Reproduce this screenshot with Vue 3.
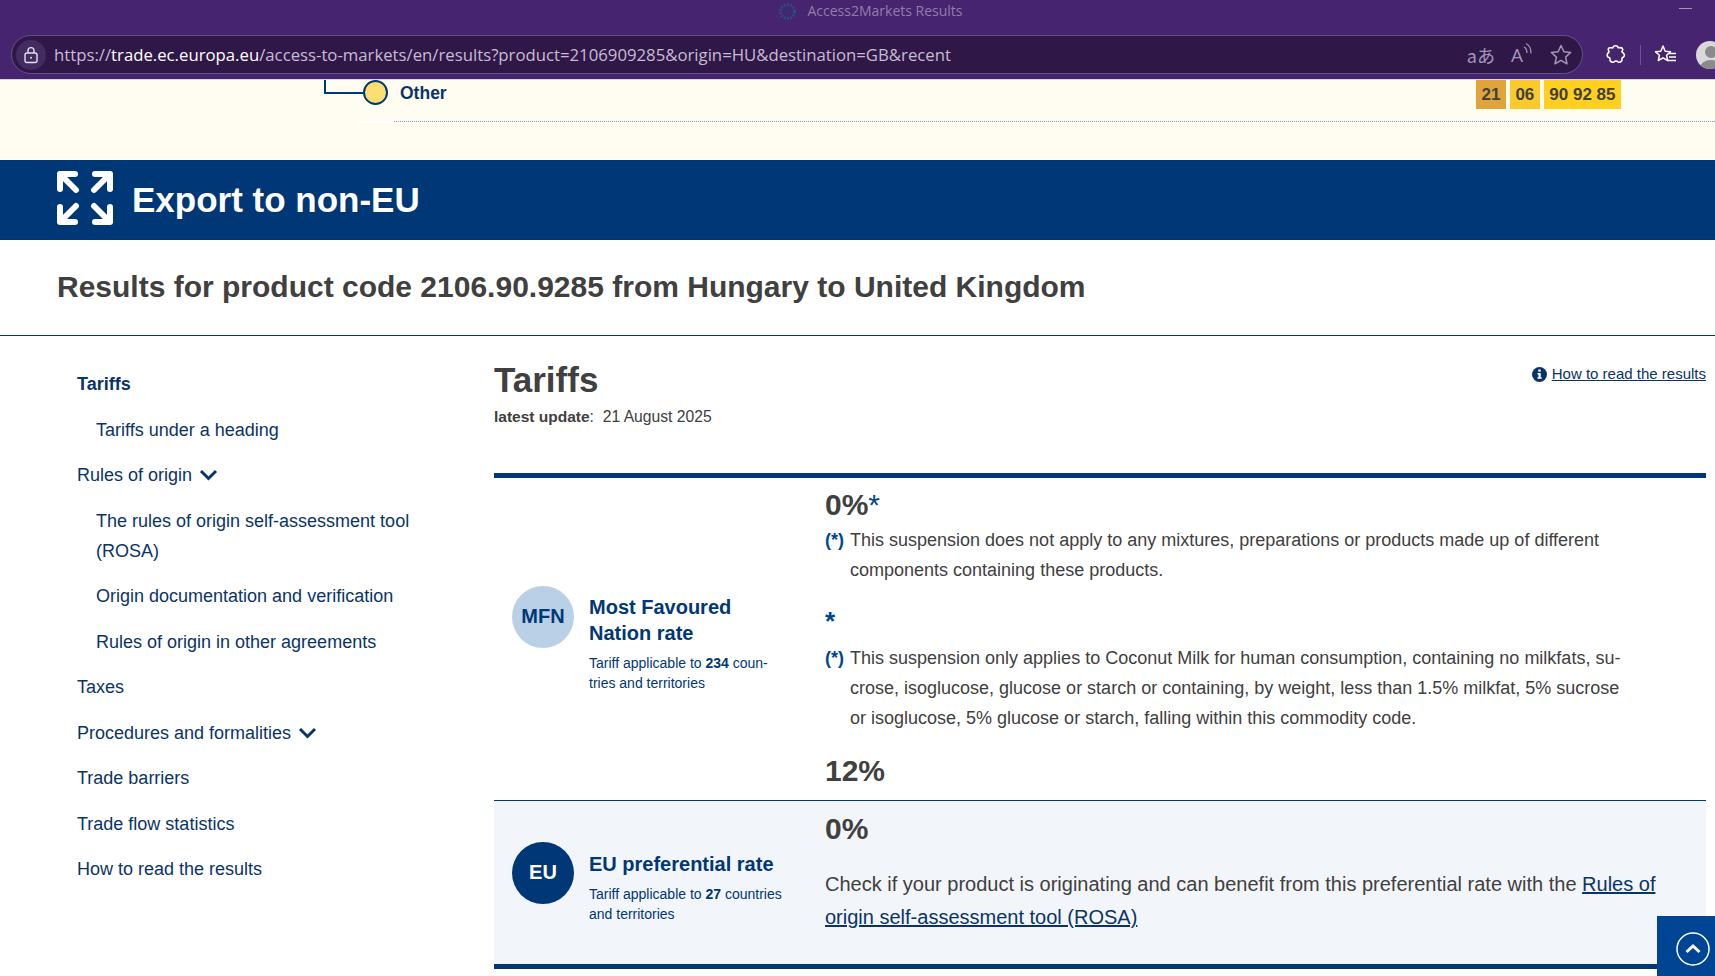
<script setup>
const menu = [
  { label: 'Tariffs', active: true },
  { label: 'Tariffs under a heading', sub: true },
  { label: 'Rules of origin', arrow: true },
  { label: 'The rules of origin self-assessment tool (ROSA)', sub: true },
  { label: 'Origin documentation and verification', sub: true },
  { label: 'Rules of origin in other agreements', sub: true },
  { label: 'Taxes' },
  { label: 'Procedures and formalities', arrow: true },
  { label: 'Trade barriers' },
  { label: 'Trade flow statistics' },
  { label: 'How to read the results' }
]
</script>

<template>
  <div class="page">
    <header class="browser">
      <div class="titlebar">
        <svg class="site-icon" width="19" height="19" viewBox="0 0 19 19"><circle cx="9.5" cy="9.5" r="7" fill="none" stroke="#2c4a86" stroke-width="3" stroke-dasharray="2 1.2" /><circle cx="9.5" cy="9.5" r="3" fill="#35306f" /></svg>
        <span>Access2Markets Results</span>
        <i class="minimize"></i>
      </div>
      <div class="toolbar">
        <div class="addressbar">
          <span class="lock">
            <svg width="18" height="18" viewBox="0 0 18 18" fill="none" stroke="#e6deef" stroke-width="1.4"><rect x="3" y="7" width="12" height="9.5" rx="2" /><path d="M6 7V4.6a3 3 0 0 1 6 0V7" /><circle cx="9" cy="11.7" r="1" fill="#e6deef" stroke="none" /></svg>
          </span>
          <span class="url"><span class="lite">https://</span>trade.ec.europa.eu<span class="lite">/access-to-markets/en/results?product=2106909285&amp;origin=HU&amp;destination=GB&amp;recent</span></span>
          <span class="addr-icons">
            <span class="translate">aあ</span>
            <span class="read">A<svg width="10" height="16" viewBox="0 0 10 16" fill="none" stroke="#a596b9" stroke-width="1.2"><path d="M1 5c2 1 3 3 3 6M3 1.5c3 1.5 5 5 5 10" /></svg></span>
            <svg width="24" height="24" viewBox="0 0 24 24" fill="none" stroke="#a596b9" stroke-width="1.5" stroke-linejoin="round"><path d="M12 2.5l2.9 6.2 6.7.8-5 4.6 1.4 6.7-6-3.4-6 3.4 1.4-6.7-5-4.6 6.7-.8z" /></svg>
          </span>
        </div>
        <div class="tools">
          <svg width="22" height="22" viewBox="0 0 22 22" fill="none" stroke="#fff" stroke-width="1.6" stroke-linejoin="round"><path d="M8 3.5c0-2.4 5-2.4 5 0 0 .8 3.5-.8 4.5 1.2 1 1.800-1 2.600-.5 3.300 1.800 1 3.500 3.500 1.500 5-1.200.8-2 .5-1.500 2 .5 2.500-2.500 4-4 2.800-1-1-3-1-4 0-1.800 1.200-4.500-.5-4-2.800.5-1.500-1.500-1.200-2.500-2.500-1-1.800.5-3.800 1.500-4.500.5-.5-1.500-1.800-.5-3.500C4 2.800 8 4.500 8 3.500z" /></svg>
          <i class="sep"></i>
          <svg width="24" height="22" viewBox="0 0 24 22" fill="none" stroke="#fff" stroke-width="1.5" stroke-linejoin="round"><path d="M9 2l2.200 5.200 5.300.5-3.900 3.600 1.100 5.200L9 13.800l-4.700 2.700 1.100-5.200L1.500 7.700l5.300-.5z" /><path d="M15 9.500h7M15 13h7M13 16.500h9" /></svg>
          <span class="avatar"><i class="head"></i><i class="body"></i></span>
        </div>
      </div>
    </header>

    <section class="cream">
      <div class="tree-row">
        <span class="connector"></span>
        <span class="dot"></span>
        <b class="other">Other</b>
        <span class="codes">
          <span class="code c1">21</span>
          <span class="code c2">06</span>
          <span class="code c3">90 92 85</span>
        </span>
      </div>
      <div class="dotted"><i></i><span></span></div>
    </section>

    <section class="band">
      <svg class="expand" width="56" height="54" viewBox="0 0 56 54" fill="none" stroke="#fff" stroke-width="6" stroke-linejoin="round" stroke-linecap="round">
        <path d="M3 18V3h15M3 3l16 16" />
        <path d="M53 18V3H38M53 3L37 19" />
        <path d="M3 36v15h15M3 51l16-16" />
        <path d="M53 36v15H38M53 51L37 35" />
      </svg>
      <h1>Export to non-EU</h1>
    </section>

    <section class="results">
      <h2>Results for product code 2106.90.9285 from Hungary to United Kingdom</h2>
    </section>

    <div class="content">
      <nav class="side">
        <a v-for="item in menu" :key="item.label" :class="{ active: item.active, sub: item.sub }">
          {{ item.label }}
          <svg v-if="item.arrow" class="chev" width="19" height="12" viewBox="0 0 19 12" fill="none" stroke="#0a3468" stroke-width="3"><path d="M2 2l7.500 7.500L17 2" /></svg>
        </a>
      </nav>

      <main class="main">
        <div class="main-head">
          <div>
            <div class="h-tariffs">Tariffs</div>
            <div class="update"><b>latest update</b>:&nbsp;&nbsp;21 August 2025</div>
          </div>
          <a class="how">
            <svg width="15" height="15" viewBox="0 0 15 15"><circle cx="7.500" cy="7.500" r="7.500" fill="#0a3468" /><rect x="6.300" y="2.500" width="2.400" height="2.200" fill="#fff" /><path d="M5.500 6h3.200v4.300h1v1.400H5.500v-1.400h1V7.400h-1z" fill="#fff" /></svg>
            <u>How to read the results</u>
          </a>
        </div>

        <div class="table">
          <div class="row">
            <div class="rate-label">
              <span class="circle light">MFN</span>
              <div class="rate-text">
                <div class="rate-title">Most Favoured<br />Nation rate</div>
                <div class="rate-sub">Tariff applicable to <b>234</b> coun&shy;tries and territories</div>
              </div>
            </div>
            <div class="rate-body first">
              <div class="pct">0%<span class="star">*</span></div>
              <p class="note"><b>(*)</b><span>This suspension does not apply to any mixtures, preparations or products made up of different components containing these products.</span></p>
              <div class="lone-star">*</div>
              <p class="note"><b>(*)</b><span>This suspension only applies to Coconut Milk for human consumption, containing no milkfats, su&shy;crose, isoglucose, glucose or starch or containing, by weight, less than 1.5% milkfat, 5% sucrose or isoglucose, 5% glucose or starch, falling within this commodity code.</span></p>
              <div class="pct second">12%</div>
            </div>
          </div>
          <div class="row eu">
            <div class="rate-label">
              <span class="circle dark">EU</span>
              <div class="rate-text">
                <div class="rate-title">EU preferential rate</div>
                <div class="rate-sub">Tariff applicable to <b>27</b> countries and territories</div>
              </div>
            </div>
            <div class="rate-body">
              <div class="pct">0%</div>
              <p class="check">Check if your product is originating and can benefit from this preferential rate with the <u>Rules of origin self-assessment tool (ROSA)</u></p>
            </div>
          </div>
        </div>
      </main>
    </div>

    <button class="to-top">
      <svg width="34" height="36" viewBox="0 0 34 36" fill="none" stroke="#fff"><circle cx="17" cy="18" r="16" stroke-width="1.500" /><path d="M10.500 21l6.500-6 6.500 6" stroke-width="3" /></svg>
    </button>
  </div>
</template>

<style scoped>
.page {
  position: relative;
  width: 1715px;
  height: 976px;
  overflow: hidden;
  background: #fff;
  font-family: "Liberation Sans", Arial, sans-serif;
  color: #404040;
}

.browser {
  height: 80px;
  background: #46246f;
  border-bottom: 1px solid #d8d3de;
  box-sizing: border-box;
  font-family: "Open Sans", "Noto Sans", sans-serif;
}
.titlebar {
  height: 35px;
  padding-top: 1px;
  box-sizing: border-box;
  position: relative;
  display: flex;
  justify-content: center;
  align-items: flex-start;
  gap: 10px;
  padding-left: 26px;
  color: #8f7fa8;
  font-size: 14px;
  line-height: 20px;
}
.site-icon { margin-top: 1px; }
.minimize {
  position: absolute;
  right: 23px;
  top: 8px;
  width: 13px;
  height: 1px;
  background: #a596b9;
}
.toolbar {
  display: flex;
  align-items: center;
  padding-left: 11px;
  height: 39px;
}
.addressbar {
  width: 1572px;
  height: 39px;
  box-sizing: border-box;
  border: 1px solid #66508a;
  border-radius: 20px;
  background: #2f1848;
  display: flex;
  align-items: center;
  padding: 0 9px 0 4px;
  flex: none;
}
.lock {
  width: 30px;
  height: 30px;
  border-radius: 50%;
  background: #432c62;
  display: flex;
  align-items: center;
  justify-content: center;
  margin-right: 8px;
}
.url {
  color: #fff;
  font-size: 16.74px;
  white-space: nowrap;
}
.url .lite { color: #c6bcd3; }
.addr-icons {
  margin-left: auto;
  display: flex;
  align-items: center;
  gap: 16px;
  color: #a596b9;
}
.translate { font-size: 18px; font-family: "Noto Sans CJK JP", sans-serif; }
.read { font-size: 19px; display: flex; align-items: flex-start; }
.tools {
  display: flex;
  align-items: center;
  margin-left: 22px;
  flex: none;
}
.sep {
  width: 1px;
  height: 20px;
  background: #6e5590;
  margin: 0 13px;
}
.avatar {
  position: relative;
  width: 28px;
  height: 28px;
  border-radius: 50%;
  background: #d9d9d9;
  overflow: hidden;
  margin-left: 18px;
  flex: none;
}
.head {
  position: absolute;
  left: 9px;
  top: 5px;
  width: 12px;
  height: 12px;
  border-radius: 50%;
  background: #8a8a8a;
}
.body {
  position: absolute;
  left: 4px;
  top: 19px;
  width: 22px;
  height: 16px;
  border-radius: 50%;
  background: #8a8a8a;
}

.cream {
  height: 80px;
  background: #fffdf2;
  box-sizing: border-box;
}
.tree-row {
  height: 41px;
  display: flex;
  align-items: flex-start;
  padding-left: 324px;
  padding-right: 94px;
  box-sizing: border-box;
}
.connector {
  width: 39px;
  height: 14px;
  flex: none;
  box-sizing: border-box;
  border-left: 2px solid #003776;
  border-bottom: 2px solid #003776;
}
.dot {
  width: 25px;
  height: 25px;
  flex: none;
  box-sizing: border-box;
  border: 2px solid #003776;
  border-radius: 50%;
  background: #fede70;
}
.other {
  margin-left: 12px;
  margin-top: 3px;
  color: #0a3468;
  font-size: 17.5px;
  line-height: 21px;
}
.codes {
  margin-left: auto;
  display: flex;
  gap: 4px;
}
.code {
  height: 29px;
  line-height: 29px;
  padding: 0 5.5px;
  font-size: 17px;
  font-weight: 700;
  color: #404040;
  background: #ffd01f;
}
.code.c1 { background: #e0a53a; }
.code.c2 { background: #fac92b; }
.dotted {
  display: flex;
  margin-left: 357px;
}
.dotted i {
  width: 37px;
  height: 2px;
  background: #fff;
}
.dotted span {
  flex: 1;
  border-top: 1px dotted #7d9cc4;
}

.band {
  height: 80px;
  background: #003776;
  display: flex;
  align-items: center;
  padding-left: 57px;
  gap: 19px;
}
.expand { margin-top: -5px; }
.band h1 {
  margin: -2px 0 0;
  color: #fff;
  font-size: 35px;
  line-height: 1;
  font-weight: 700;
}

.results {
  height: 96px;
  box-sizing: border-box;
  border-bottom: 1px solid #003776;
  padding: 30px 0 0 57px;
}
.results h2 {
  margin: 0;
  font-size: 30px;
  line-height: 34px;
  color: #404040;
}

.content {
  display: flex;
}
.side {
  width: 494px;
  flex: none;
  box-sizing: border-box;
  padding: 33px 50px 0 77px;
}
.side a {
  display: block;
  color: #0a3468;
  font-size: 18px;
  line-height: 30px;
  margin-bottom: 15.5px;
}
.side a.active { font-weight: 700; }
.side a.sub { padding-left: 19px; }
.chev { margin-left: 2px; }

.main {
  width: 1212px;
  flex: none;
}
.main-head {
  height: 137px;
  box-sizing: border-box;
  padding-top: 22px;
  display: flex;
  justify-content: space-between;
  align-items: flex-start;
}
.h-tariffs {
  font-size: 35px;
  line-height: 44px;
  font-weight: 700;
  color: #404040;
}
.update {
  font-size: 15.7px;
  line-height: 22px;
  margin-top: 4px;
}
.update b { font-size: 15.5px; }
.how {
  display: flex;
  align-items: center;
  gap: 5px;
  color: #0a3468;
  font-size: 15px;
  line-height: 20px;
  margin-top: 6px;
}
.table {
  border-top: 5px solid #003776;
  border-bottom: 5px solid #003776;
}
.row {
  display: flex;
  border-bottom: 1px solid #003776;
  height: 323px;
  box-sizing: border-box;
}
.row.eu {
  border-bottom: 0;
  height: 163px;
  background: #f2f5fa;
}
.rate-label {
  width: 331px;
  flex: none;
  box-sizing: border-box;
  padding: 0 20px 0 18px;
  display: flex;
  align-items: center;
  gap: 15px;
}
.row.eu .rate-label { padding-bottom: 2px; }
.rate-text {
  width: 197px;
  flex: none;
  margin-top: 8px;
}
.row.eu .rate-text { margin-top: 11px; }
.circle {
  width: 62px;
  height: 62px;
  flex: none;
  border-radius: 50%;
  display: flex;
  align-items: center;
  justify-content: center;
  font-size: 20px;
  font-weight: 700;
  margin-bottom: 45px;
}
.circle.light { background: #bad0e6; color: #003776; }
.circle.dark { background: #003776; color: #fff; margin-bottom: 18px; }
.rate-title {
  color: #003776;
  font-size: 20px;
  line-height: 26px;
  font-weight: 700;
}
.rate-sub {
  color: #003776;
  font-size: 14px;
  line-height: 20px;
  margin-top: 7px;
  hyphens: manual;
}
.rate-body {
  flex: 1;
  padding-right: 50px;
}
.rate-body.first { padding-top: 6px; }
.pct {
  font-size: 30px;
  line-height: 41px;
  font-weight: 700;
  color: #404040;
}
.star { color: #004494; font-weight: 400; }
.note {
  display: flex;
  margin: 0;
  width: 800px;
  font-size: 18px;
  line-height: 30px;
}
.note b {
  width: 25px;
  flex: none;
  color: #004494;
}
.lone-star {
  color: #004494;
  font-size: 26px;
  font-weight: 700;
  line-height: 30px;
  margin-top: 21px;
  margin-bottom: 7px;
}
.second { margin-top: 17px; }
.row.eu .pct { margin-top: 7px; }
.check {
  margin: 19px 0 0;
  font-size: 20px;
  line-height: 33px;
  width: 845px;
}
.check u { color: #0a3468; }

.to-top {
  position: absolute;
  right: 0;
  bottom: 0;
  width: 58px;
  height: 60px;
  padding: 5px 0 0 14px;
  box-sizing: border-box;
  border: 0;
  background: #004494;
  display: flex;
  align-items: center;
  justify-content: center;
}
</style>

<style>
html, body { margin: 0; overflow: hidden; }
</style>
